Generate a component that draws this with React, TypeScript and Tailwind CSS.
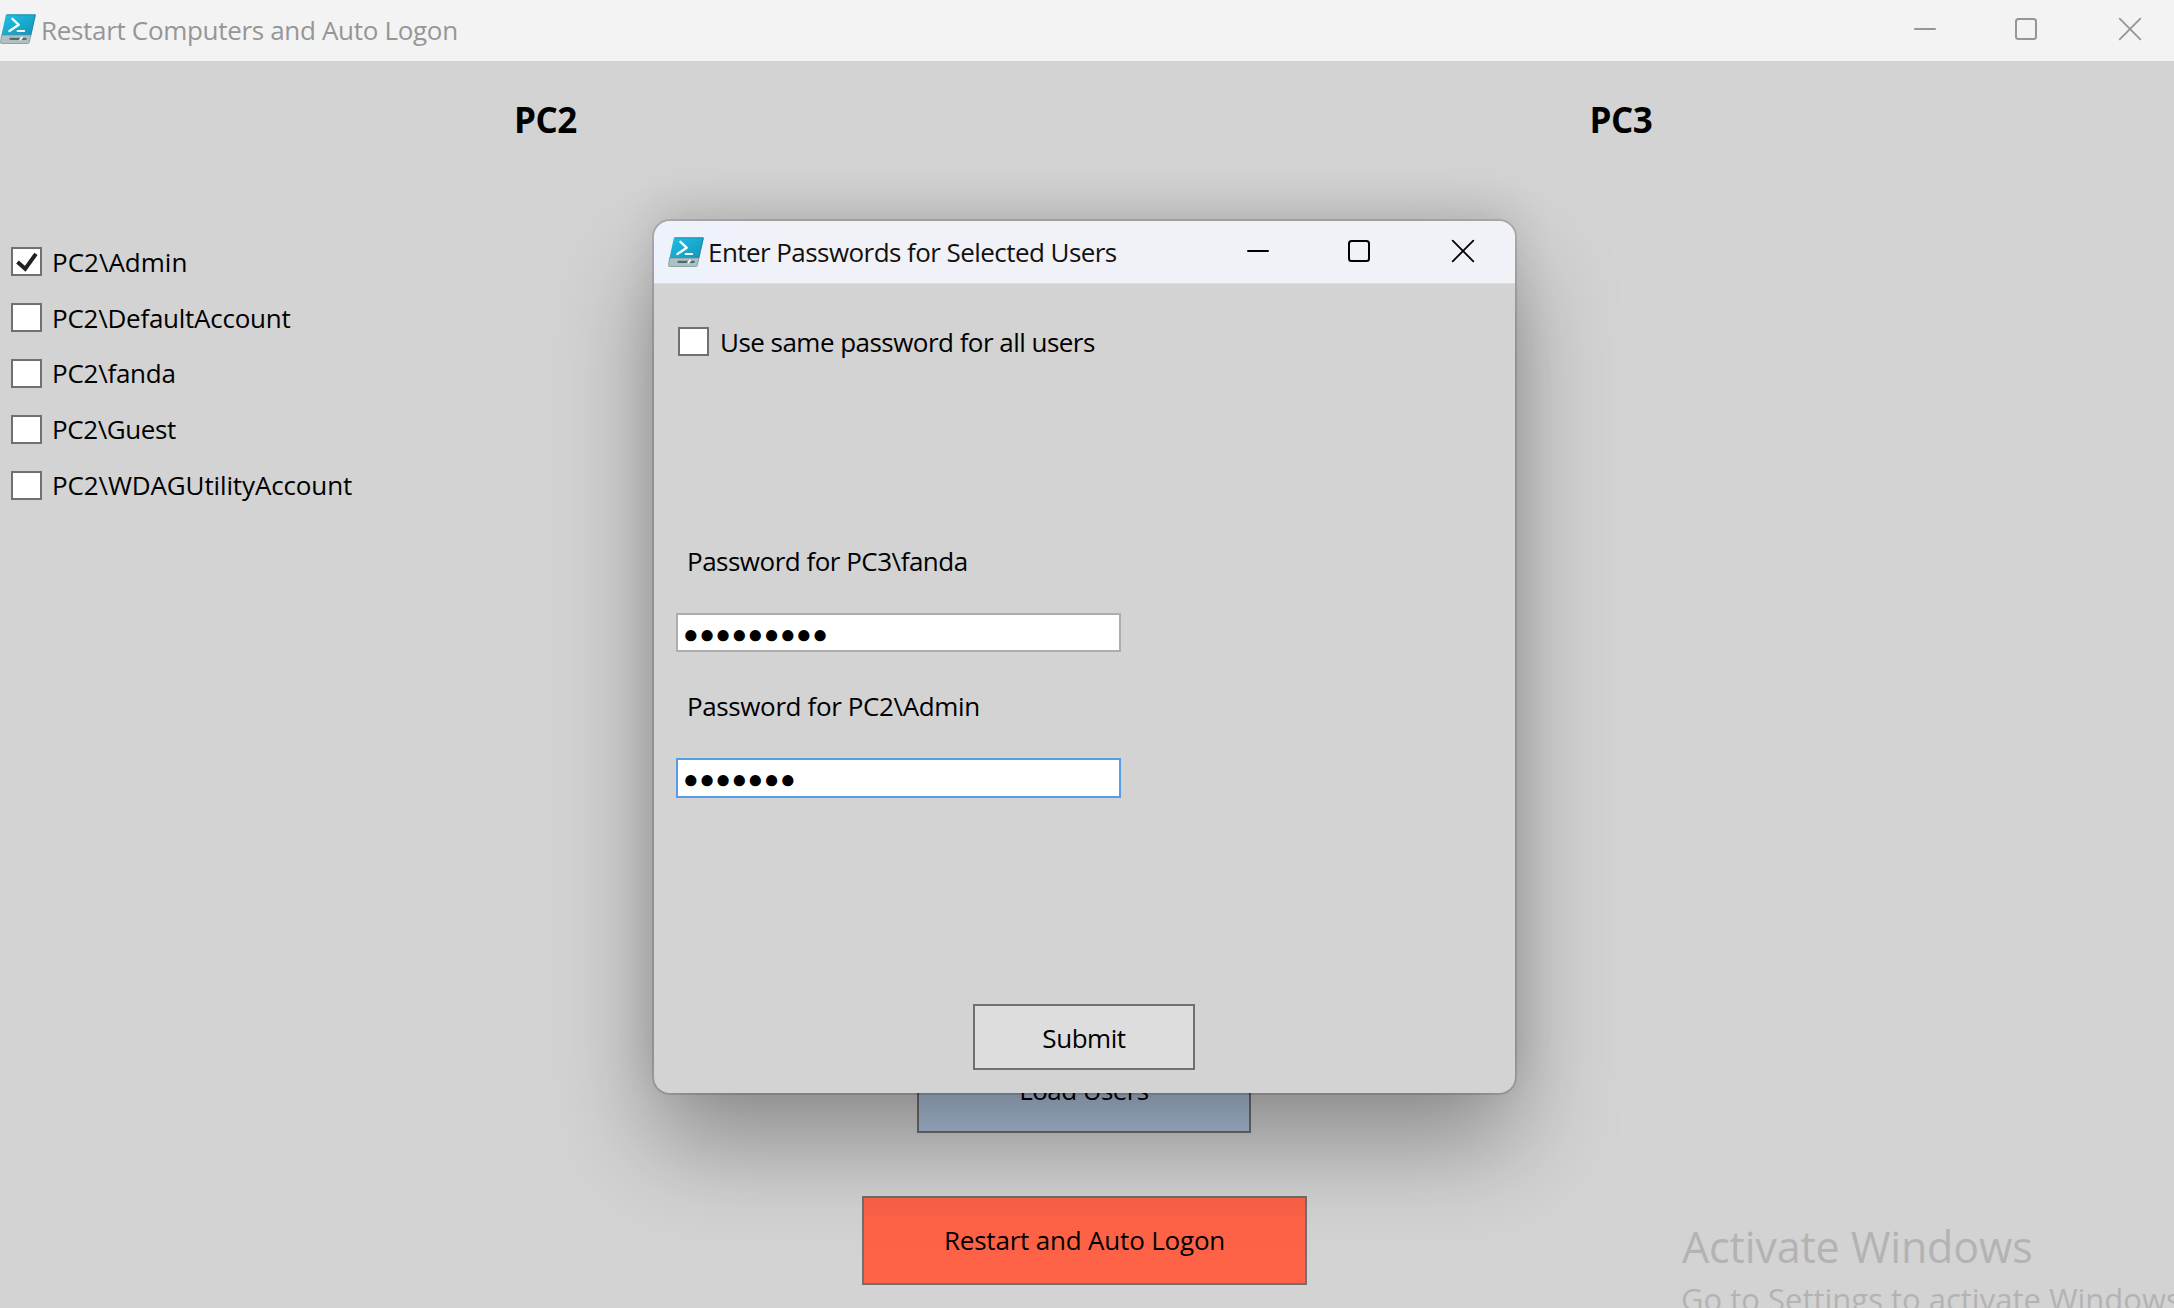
type IconProps = { className?: string };

function PowerShellIcon({ id, className }: { id: string; className?: string }) {
  return (
    <svg viewBox="0 0 36 30" className={`h-[30px] w-9 shrink-0 ${className ?? ""}`} aria-hidden="true">
      <defs>
        <linearGradient id={id} x1="0" y1="0" x2="1" y2="1">
          <stop offset="0" stopColor="#1fc0e6" />
          <stop offset="1" stopColor="#1494b8" />
        </linearGradient>
      </defs>
      <path d="M7 .4H34.9Q36 .4 35.8 1.6L31 21H1.5L5.7 1.6Q6 .4 7 .4Z" fill={`url(#${id})`} />
      <path d="M1.5 21H31L29.3 28.3Q29 29.5 27.8 29.5H1.8Q.3 29.5 .6 28Z" fill="#afc0c3" stroke="#6f8b91" strokeWidth=".7" />
      <path d="M6.7 .8H35.2L31 21" fill="none" stroke="#16839f" strokeWidth=".8" />
      <path d="M12.4 4.8L18.8 10.8L9.4 17" fill="none" stroke="#f5fcff" strokeWidth="2.3" strokeLinecap="round" strokeLinejoin="round" />
      <path d="M17.6 16.9H24.2" stroke="#f5fcff" strokeWidth="2" strokeLinecap="round" />
      <path d="M10.4 24.8H25.8" stroke="#4d6c74" strokeWidth="2.2" strokeLinecap="round" />
      <path d="M20.3 25.4L22 23.6" stroke="#f0f6f7" strokeWidth="2.2" strokeLinecap="round" />
    </svg>
  );
}

const MinimizeIcon = ({ className }: IconProps) => (
  <svg viewBox="0 0 24 24" className={`size-6 ${className ?? ""}`} fill="none" stroke="currentColor" strokeWidth="2" strokeLinecap="round">
    <path d="M2 12H22" />
  </svg>
);

const MaximizeIcon = ({ className }: IconProps) => (
  <svg viewBox="0 0 24 24" className={`size-6 ${className ?? ""}`} fill="none" stroke="currentColor" strokeWidth="2">
    <rect x="2" y="2" width="20" height="20" rx="2.5" />
  </svg>
);

const CloseIcon = ({ className }: IconProps) => (
  <svg viewBox="0 0 24 24" className={`size-6 ${className ?? ""}`} fill="none" stroke="currentColor" strokeWidth="1.8" strokeLinecap="round">
    <path d="M1.7 1.7L22.3 22.3M22.3 1.7L1.7 22.3" />
  </svg>
);

function WindowButtons({ className }: { className: string }) {
  return (
    <div className={`ml-auto flex h-full items-center ${className}`}>
      <button aria-label="Minimize" className="mr-[77px] flex"><MinimizeIcon /></button>
      <button aria-label="Maximize" className="mr-20 flex"><MaximizeIcon /></button>
      <button aria-label="Close" className="flex"><CloseIcon /></button>
    </div>
  );
}

function CheckBox({ checked, label, spacing }: { checked?: boolean; label: string; spacing: string }) {
  return (
    <label className="flex h-[55.8px] shrink-0 items-center">
      <span className="flex h-[29px] w-[31px] shrink-0 items-center justify-center border-2 border-[#707070] bg-white">
        {checked && (
          <svg viewBox="0 0 22 20" className="h-5 w-[22px]" fill="none" stroke="#212121" strokeWidth="4">
            <path d="M1.5 10L9.2 16.8L20 1.8" />
          </svg>
        )}
      </span>
      <span className={`ml-2.5 whitespace-pre ${spacing}`}>{label}</span>
    </label>
  );
}

const users = [
  { label: "PC2\\Admin", checked: true, spacing: "tracking-normal" },
  { label: "PC2\\DefaultAccount", spacing: "tracking-[-0.25px]" },
  { label: "PC2\\fanda", spacing: "tracking-[-0.25px]" },
  { label: "PC2\\Guest", spacing: "tracking-[-0.4px]" },
  { label: "PC2\\WDAGUtilityAccount", spacing: "tracking-[-0.13px]" },
];

function PasswordDialog() {
  return (
    <section className="absolute top-[221px] left-[654px] flex h-[872px] w-[861px] flex-col overflow-hidden rounded-2xl bg-[#d3d3d3] shadow-[0_0_0_2px_rgba(0,0,0,0.13),0_50px_100px_rgba(0,0,0,0.34),0_-14px_40px_rgba(0,0,0,0.10)]">
      <header className="flex h-[63px] shrink-0 items-center border-b border-[#dcdde1] bg-linear-to-r from-[#eef2fc] to-[#f1f2f8] to-20% pr-10 pl-3.5">
        <PowerShellIcon id="dialogIcon" />
        <h2 className="ml-1 tracking-[-0.56px] whitespace-pre text-[#111]">Enter Passwords for Selected Users</h2>
        <WindowButtons className="pb-0.5 text-black" />
      </header>
      <div className="flex flex-1 flex-col pt-[30px] pl-6">
        <CheckBox label="Use same password for all users" spacing="pl-px tracking-[-0.53px]" />
        <p className="mt-[173px] ml-[9px] h-9 leading-9 tracking-[-0.5px]">Password for PC3\fanda</p>
        <div className="mt-[34px] -ml-0.5 flex h-[39px] w-[445px] items-center border-2 border-[#abadb3] bg-white pt-px pl-[5px] text-[26px] leading-none tracking-[0.45px]">●●●●●●●●●</div>
        <p className="mt-[36px] ml-[9px] h-9 leading-9 tracking-[-0.38px]">Password for PC2\Admin</p>
        <div className="mt-[34px] -ml-0.5 flex h-10 w-[445px] items-center border-2 border-[#569de5] bg-white pt-px pl-[5px] text-[26px] leading-none tracking-[0.45px]">●●●●●●●</div>
        <button className="mt-[206px] ml-[295px] h-[66px] w-[222px] border-2 border-[#707070] bg-[#dddddd] pt-0.5 tracking-[-0.44px]">Submit</button>
      </div>
    </section>
  );
}

export default function App() {
  return (
    <div className="relative flex h-[1308px] w-[2174px] flex-col overflow-hidden bg-[#d3d3d3] font-['Open_Sans','Noto_Sans',sans-serif] text-[26px] leading-8 text-black">
      <header className="flex h-[61px] shrink-0 items-center bg-[#f3f3f3] pr-8">
        <PowerShellIcon id="windowIcon" className="mb-1" />
        <h1 className="mb-0.5 ml-[5px] tracking-[-0.32px] whitespace-pre text-[#969696]">Restart Computers and Auto Logon</h1>
        <WindowButtons className="pb-[3px] text-[#969696]" />
      </header>

      <main className="flex flex-1 flex-col">
        <div className="flex h-[986px] shrink-0">
          <section className="w-[1091px] pt-[35px]">
            <h2 className="h-12 text-center text-[35px] leading-[48px] font-bold tracking-[-0.5px]">PC2</h2>
            <div className="mt-[90px] flex flex-col pl-[11px]">
              {users.map((u) => (
                <CheckBox key={u.label} {...u} />
              ))}
            </div>
          </section>
          <section className="w-[1060px] pt-[35px]">
            <h2 className="h-12 text-center text-[35px] leading-[48px] font-bold tracking-[-0.5px]">PC3</h2>
          </section>
        </div>
        <div className="flex w-[2168px] flex-col items-center">
          <button className="h-[86px] w-[334px] border-2 border-[#707070] bg-[#b0c4de] tracking-[-0.6px]">Load Users</button>
          <button className="mt-[63px] -mb-px h-[89px] w-[445px] border-2 border-[#707070] bg-[#ff6347] pb-px pl-px tracking-[-0.19px]">Restart and Auto Logon</button>
        </div>
      </main>

      <PasswordDialog />

      <aside className="pointer-events-none absolute top-[1216px] left-[1682px] whitespace-pre text-[#b3b3b3]">
        <p className="text-[43px] leading-[62px] tracking-[-0.15px]">Activate Windows</p>
        <p className="-ml-px text-[31px] leading-[42px]">Go to Settings to activate Windows</p>
      </aside>
    </div>
  );
}
